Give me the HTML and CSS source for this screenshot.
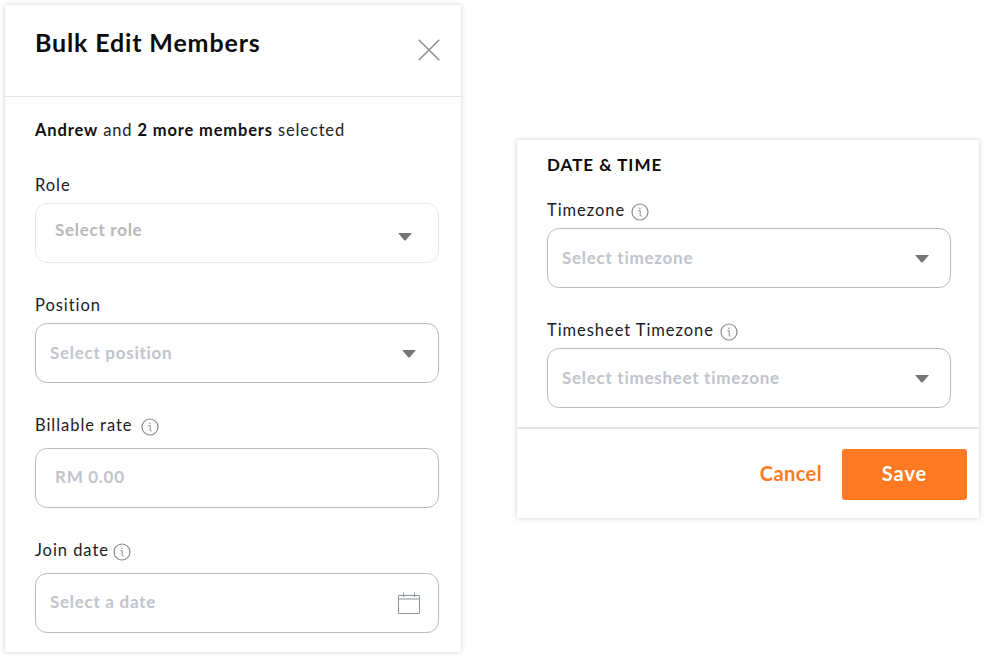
FILE: index.html
```html
<!DOCTYPE html>
<html lang="en">
<head>
<meta charset="utf-8">
<title>Bulk Edit Members</title>
<link rel="stylesheet" href="styles.css">
</head>
<body>
<svg class="defs" width="0" height="0" aria-hidden="true">
  <symbol id="info" viewBox="0 0 18 18">
    <circle cx="9" cy="9" r="8" fill="none" stroke="#8a8a8a" stroke-width="1.2"/>
    <path d="M7.4 7.6H9.2V12.2C9.2 13 9.7 13.2 10.6 13" fill="none" stroke="#8a8a8a" stroke-width="1"/>
    <circle cx="8.9" cy="5.2" r=".8" fill="#8a8a8a"/>
  </symbol>
  <symbol id="caret" viewBox="0 0 14 8">
    <path d="M0 0H14L8 7Q7 8 6 7Z" fill="#767676"/>
  </symbol>
</svg>

<section class="panel panel-bulk">
  <header class="panel-head">
    <h1 class="panel-title">Bulk Edit Members</h1>
    <svg class="close" viewBox="0 0 22 22" aria-label="Close"><path d="M.7.7 21.3 21.3M21.3.7.7 21.3" stroke="#8e8e8e" stroke-width="1.5" fill="none"/></svg>
  </header>
  <div class="panel-body">
    <p class="summary"><b>Andrew</b> and <b>2 more members</b> selected</p>
    <div class="field field-role">
      <label class="label">Role</label>
      <div class="control control-faint">
        <span class="ph ph-role">Select role</span>
        <svg class="caret caret-role"><use href="#caret"/></svg>
      </div>
    </div>
    <div class="field field-plain">
      <label class="label">Position</label>
      <div class="control">
        <span class="ph ph-select">Select position</span>
        <svg class="caret"><use href="#caret"/></svg>
      </div>
    </div>
    <div class="field field-info">
      <label class="label label-rate">Billable rate <svg class="info"><use href="#info"/></svg></label>
      <div class="control">
        <span class="ph ph-rate">RM 0.00</span>
      </div>
    </div>
    <div class="field field-info">
      <label class="label label-date">Join date <svg class="info"><use href="#info"/></svg></label>
      <div class="control">
        <span class="ph">Select a date</span>
        <svg class="calendar" viewBox="0 0 22 22"><path d="M.5 3.5H21.5V21.5H.5ZM.5 7H21.5M5.5 .5V5M16.5 .5V5" fill="none" stroke="#8c96a3" stroke-width="1"/></svg>
      </div>
    </div>
  </div>
</section>

<section class="panel panel-time">
  <div class="time-body">
    <h2 class="section-title">DATE &amp; TIME</h2>
    <div class="field field-tz">
      <label class="label">Timezone <svg class="info"><use href="#info"/></svg></label>
      <div class="control control-tz">
        <span class="ph ph-select">Select timezone</span>
        <svg class="caret"><use href="#caret"/></svg>
      </div>
    </div>
    <div class="field field-tz">
      <label class="label">Timesheet Timezone <svg class="info"><use href="#info"/></svg></label>
      <div class="control control-tz">
        <span class="ph ph-select">Select timesheet timezone</span>
        <svg class="caret"><use href="#caret"/></svg>
      </div>
    </div>
  </div>
  <footer class="panel-foot">
    <button class="btn-link" type="button">Cancel</button>
    <button class="btn-save" type="button">Save</button>
  </footer>
</section>
</body>
</html>
```
FILE: styles.css
```css
* { box-sizing: border-box; }
html, body { margin: 0; height: 100%; }
body {
  display: flex;
  align-items: flex-start;
  gap: 56px;
  padding: 5px 5px 0;
  background: #fff;
  font-family: Lato, "Noto Sans", sans-serif;
  color: #1d1d1d;
  overflow: hidden;
}
.defs { position: absolute; }
.panel {
  background: #fff;
  box-shadow: 0 0 5px rgba(0, 0, 0, .2);
}
.panel-bulk { width: 456px; height: 647px; flex: none; }
.panel-time { width: 462px; height: 378px; flex: none; margin-top: 135px; }
.panel-head {
  height: 92px;
  border-bottom: 1px solid #e4e4e4;
  padding: 21px 21px 0 30px;
  display: flex;
  justify-content: space-between;
  align-items: flex-start;
}
.panel-title {
  margin: 0;
  font-size: 25px;
  line-height: 32px;
  font-weight: 700;
  letter-spacing: .85px;
  color: #0c0c0c;
}
.close { width: 22px; height: 22px; margin-top: 13px; }
.panel-body { padding: 21px 22px 0 30px; }
.summary { margin: 0; font-size: 16.5px; line-height: 24px; color: #222; letter-spacing: .85px; }
.summary b { font-weight: 700; color: #111; }
.field { display: flex; flex-direction: column; }
.field-role { margin-top: 34px; }
.field-plain { margin-top: 33px; }
.field-info { margin-top: 30px; }
.field-tz { margin-top: 30px; }
.section-title + .field-tz { margin-top: 22px; }
.label {
  display: flex;
  align-items: center;
  gap: 6px;
  height: 18px;
  margin-bottom: 9px;
  font-size: 16.5px;
  line-height: 18px;
  letter-spacing: .95px;
  color: #1c1c1c;
}
.field-info .label { height: 25px; margin-bottom: 10px; line-height: 23px; }
.field-tz .label { height: 25px; margin-bottom: 5px; line-height: 23px; }
.label-rate { gap: 9px; }
.label-date { gap: 4px; }
.info { width: 18px; height: 18px; flex: none; margin-top: 2px; }
.control {
  display: flex;
  align-items: center;
  justify-content: space-between;
  height: 60px;
  padding: 0 22px 0 14px;
  border: 1px solid #bcbcbc;
  border-radius: 12px;
}
.control-faint { border-color: #e8e8e8; padding-right: 26px; align-items: flex-start; }
.ph { font-size: 17px; line-height: 20px; padding-bottom: 2px; font-weight: 700; letter-spacing: .72px; color: #c2c4cc; }
.ph-select { padding-bottom: 0; }
.ph-role { color: #b8b8b8; padding: 16px 0 0 5px; }
.ph-rate { padding-left: 5px; }
.caret { width: 14px; height: 8px; flex: none; margin-top: 1px; }
.caret-role { margin-top: 29px; }
.calendar { width: 22px; height: 22px; flex: none; margin: -1px -4px 0 0; }
.time-body { height: 289px; padding: 14px 28px 0 30px; border-bottom: 2px solid #e4e4e4; }
.section-title {
  margin: 0;
  font-size: 17px;
  line-height: 22px;
  font-weight: 700;
  letter-spacing: 1px;
  color: #0a0a0a;
}
.control-tz { padding-right: 21px; padding-left: 14px; }
.panel-foot {
  display: flex;
  justify-content: flex-end;
  align-items: center;
  gap: 20px;
  padding: 20px 12px 0 0;
}
.btn-link {
  padding: 0 0 3px;
  border: 0;
  background: none;
  font: 700 20px Lato, sans-serif;
  letter-spacing: .4px;
  color: #ff7a22;
}
.btn-save {
  width: 125px;
  height: 51px;
  padding: 0 0 3px;
  border: 0;
  border-radius: 3px;
  background: #ff7a22;
  color: #fff;
  font: 700 20px Lato, sans-serif;
  letter-spacing: .9px;
}
```
